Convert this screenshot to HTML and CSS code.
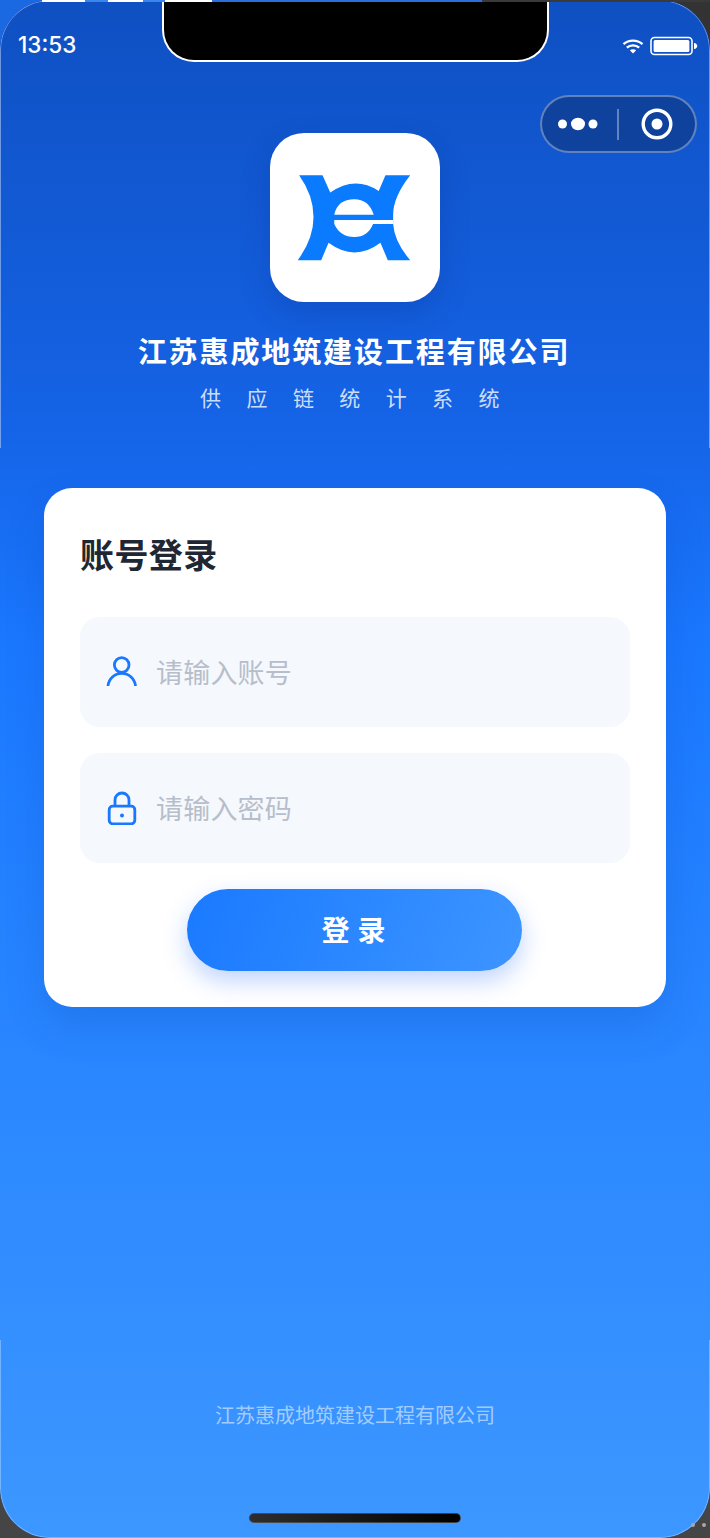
FILE: index.html
```html
<!DOCTYPE html>
<html lang="zh-CN">
<head>
<meta charset="utf-8">
<title>账号登录</title>
<link rel="stylesheet" href="styles.css">
</head>
<body>
<div class="page">
  <div class="top-strip"></div>
  <main class="device">
    <div class="device-edge"></div>
    <div class="notch"></div>
    <div class="time">13:53</div>
    <div class="status-icons">
      <svg class="wifi" viewBox="0 0 22 16" width="22" height="16">
        <path class="wifi-arc" d="M1.5 6.2C6.8 1.4 15.2 1.4 20.5 6.2"/>
        <path class="wifi-arc" d="M4.8 9.6C8.2 6.6 13.8 6.6 17.2 9.6"/>
        <path class="wifi-dot" d="M7.8 12.2C9.6 10.8 12.4 10.8 14.2 12.2L11 15.6Z"/>
      </svg>
      <svg class="battery" viewBox="0 0 48 20" width="48" height="20">
        <rect class="batt-shell" x="1" y="1.5" width="41" height="17" rx="3.5"/>
        <rect class="batt-fill" x="3.6" y="4" width="35.8" height="12" rx="1.5"/>
        <path class="batt-fill" d="M44 7C46 7.2 47.3 8.4 47.3 10S46 12.8 44 13Z"/>
      </svg>
    </div>
    <div class="capsule">
      <svg class="capsule-dots" viewBox="0 0 42 14" width="42" height="14">
        <circle cx="4.5" cy="7" r="4.5"/><ellipse cx="20" cy="7" rx="7" ry="6.2"/><circle cx="35" cy="7" r="4.5"/>
      </svg>
      <span class="capsule-line"></span>
      <svg class="capsule-rec" viewBox="0 0 32 32" width="32" height="32">
        <circle class="rec-ring" cx="16" cy="16" r="13.8"/><circle class="rec-dot" cx="16" cy="16" r="5.5"/>
      </svg>
    </div>

    <div class="logo">
      <svg viewBox="30 24 508 508" width="170" height="170">
        <path class="logo-blue" d="M117 150H187L210 202Q283 150 355 197L375 150H449Q398 215 398 268V296Q402 350 449 404H382L360 352Q283 410 205 352L183 404H113Q160 340 160 275Q160 210 117 150Z"/>
        <path class="logo-white" d="M222 268Q232 222 282 222Q325 222 340 268Z"/>
        <path class="logo-white" d="M222 284H398V296H338Q322 335 282 335Q240 335 222 296Z"/>
      </svg>
    </div>
    <h1 class="title">江苏惠成地筑建设工程有限公司</h1>
    <p class="subtitle">供应链统计系统</p>

    <section class="card">
      <h2 class="card-title">账号登录</h2>
      <div class="field">
        <svg class="field-icon" viewBox="0 0 32 34" width="32" height="34">
          <circle cx="15.7" cy="10" r="7.3"/>
          <path d="M2 31A13.8 13.8 0 0 1 29.5 31"/>
        </svg>
        <span class="placeholder">请输入账号</span>
      </div>
      <div class="field">
        <svg class="field-icon" viewBox="0 0 32 34" width="32" height="34">
          <rect x="3.2" y="15.2" width="25.6" height="17.6" rx="3.5"/>
          <path d="M9 15V9A7 7 0 0 1 23 9V15"/>
          <circle class="lock-dot" cx="16" cy="24.5" r="2"/>
        </svg>
        <span class="placeholder">请输入密码</span>
      </div>
      <button class="login" type="button">登录</button>
    </section>

    <footer class="footer">江苏惠成地筑建设工程有限公司</footer>
    <div class="home-bar"></div>
  </main>
  <div class="corner-dots"><span></span><span></span></div>
</div>
</body>
</html>
```
FILE: styles.css
```css
* { box-sizing: border-box; }
html, body { margin: 0; padding: 0; }
body { width: 710px; height: 1538px; overflow: hidden; font-family: "Noto Sans CJK SC", "Noto Sans", sans-serif; }

.page {
  position: relative;
  width: 710px;
  height: 1538px;
  background:
    linear-gradient(90deg, #1a68e2 0 50%, #333333 50%) top / 100% 60px no-repeat,
    #454545;
}
.top-strip {
  position: absolute;
  top: 0; left: 0; right: 0;
  height: 2px;
  z-index: 3;
  background: linear-gradient(90deg,
    transparent 0 42px, #fff 42px 85px, #3a86ee 85px 108px, #fff 108px 143px,
    #3a86ee 143px 165px, #fff 165px 212px, #2b6fdc 212px 482px, #3a3a3a 482px 100%);
}
.device {
  position: relative;
  width: 710px;
  height: 1538px;
  border-radius: 50px;
  overflow: hidden;
  display: flex;
  flex-direction: column;
  align-items: center;
  background: linear-gradient(180deg, #0f50c2 0, #1563e6 420px, #1a78ff 640px, #2b88ff 1100px, #3d97ff 1538px);
}
.device-edge {
  position: absolute;
  inset: 0;
  border-radius: 50px;
  border: 1px solid transparent;
  background: linear-gradient(180deg, rgba(255,255,255,.4) 0 448px, transparent 448px 1340px, rgba(255,255,255,.3) 1340px) border-box;
  -webkit-mask: linear-gradient(#000 0 0) padding-box, linear-gradient(#000 0 0) border-box;
  -webkit-mask-composite: xor;
  mask-composite: exclude;
  pointer-events: none;
}
.notch {
  position: absolute;
  top: 0;
  left: 162px;
  width: 387px;
  height: 62px;
  background: #000;
  border: 2px solid #fff;
  border-top: 0;
  border-radius: 0 0 32px 32px;
}
.time {
  position: absolute;
  top: 31px;
  left: 18px;
  font: 500 22.5px/28px "Inter", "Liberation Sans", sans-serif;
  color: #fff;
}
.status-icons {
  position: absolute;
  top: 36px;
  left: 622px;
  display: flex;
  align-items: center;
  gap: 6px;
}
.wifi { display: block; }
.wifi-arc { fill: none; stroke: #fff; stroke-width: 2.4; }
.wifi-dot { fill: #fff; }
.battery { display: block; margin-left: 0; }
.batt-shell { fill: none; stroke: #fff; stroke-width: 1.6; }
.batt-fill { fill: #fff; }

.capsule {
  position: absolute;
  top: 95px;
  left: 540px;
  width: 157px;
  height: 58px;
  border-radius: 29px;
  border: 2px solid rgba(255,255,255,.34);
  background: rgba(15, 60, 140, .75);
  display: flex;
  align-items: center;
  padding-left: 16px;
}
.capsule-dots { fill: #fff; display: block; }
.capsule-line { width: 2px; height: 31px; margin-left: 17px; background: rgba(255,255,255,.35); }
.capsule-rec { display: block; margin-left: 22px; }
.rec-ring { fill: none; stroke: #fff; stroke-width: 3.4; }
.rec-dot { fill: #fff; }

.logo {
  width: 170px;
  height: 169px;
  margin-top: 133px;
  border-radius: 34px;
  background: #fff;
  box-shadow: 0 12px 30px rgba(0, 40, 130, .22);
  overflow: hidden;
  flex: none;
}
.logo svg { display: block; }
.logo-blue { fill: #0a7bff; }
.logo-white { fill: #fff; }

.title {
  margin: 28px 0 0;
  height: 40px;
  font-size: 29px;
  line-height: 40px;
  font-weight: 700;
  letter-spacing: 1.9px;
  color: #fff;
  white-space: nowrap;
  text-indent: -2px;
}
.subtitle {
  margin: 12px 0 0;
  height: 30px;
  font-size: 21px;
  line-height: 30px;
  letter-spacing: 25.4px;
  color: rgba(255,255,255,.8);
  white-space: nowrap;
  text-indent: 15px;
}
.card {
  width: 622px;
  margin-top: 76px;
  padding: 44px 36px 36px;
  border-radius: 28px;
  background: #fff;
  box-shadow: 0 20px 40px rgba(0, 50, 150, .16);
  display: flex;
  flex-direction: column;
  flex: none;
}
.card-title {
  margin: 0 0 41px;
  height: 44px;
  font-size: 34px;
  line-height: 44px;
  font-weight: 700;
  letter-spacing: .4px;
  color: #1f2733;
}
.field {
  display: flex;
  align-items: center;
  gap: 18px;
  height: 110px;
  margin-bottom: 26px;
  padding-left: 26px;
  border-radius: 20px;
  background: #f5f8fc;
}
.field-icon { display: block; flex: none; fill: none; stroke: #1a78ff; stroke-width: 2.8; }
.lock-dot { fill: #1a78ff; stroke: none; }
.placeholder {
  font-size: 27px;
  line-height: 34px;
  letter-spacing: .2px;
  color: #b7becb;
}
.login {
  align-self: center;
  width: 335px;
  height: 82px;
  margin-left: -1px;
  border: 0;
  border-radius: 41px;
  padding: 0 0 3px 6px;
  background: linear-gradient(110deg, #1a7aff, #3d95ff);
  box-shadow: 0 10px 24px rgba(26, 100, 255, .28);
  font-family: inherit;
  font-size: 28px;
  font-weight: 700;
  letter-spacing: 8px;
  color: #fff;
}
.footer {
  margin-top: 396px;
  height: 24px;
  font-size: 20px;
  line-height: 24px;
  color: rgba(255,255,255,.55);
  white-space: nowrap;
}
.home-bar {
  position: absolute;
  left: 249px;
  top: 1513px;
  width: 212px;
  height: 10px;
  border-radius: 5px;
  background: linear-gradient(90deg, #2e2e2e, #000);
  border: 1px solid rgba(90,90,90,.7);
}
.corner-dots {
  position: absolute;
  left: 691px;
  top: 1523px;
  display: flex;
  gap: 7px;
}
.corner-dots span {
  width: 4px;
  height: 4px;
  border-radius: 50%;
  background: #a8a8a8;
}
```
